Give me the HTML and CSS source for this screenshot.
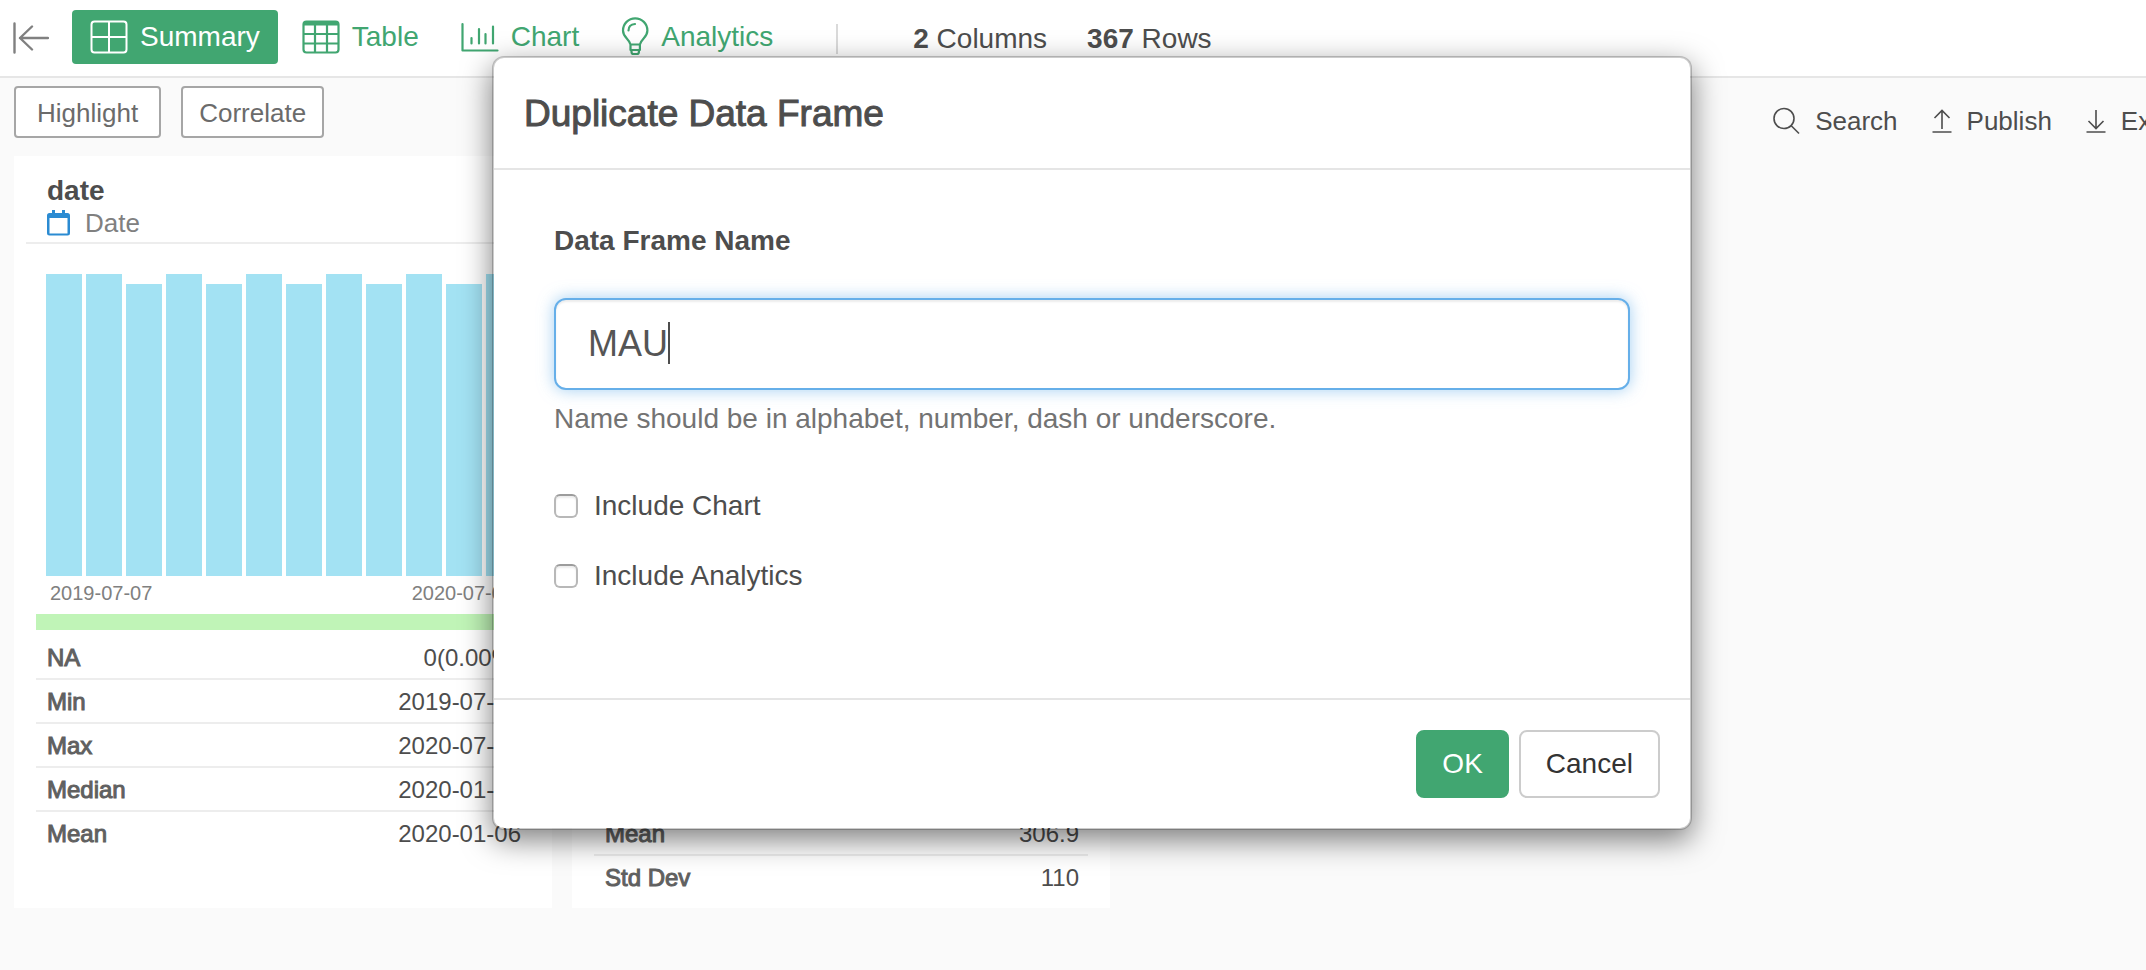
FILE: index.html
```html
<!DOCTYPE html>
<html lang="en">
<head>
<meta charset="utf-8">
<title>Duplicate Data Frame</title>
<link rel="stylesheet" href="styles.css">
</head>
<body>
<header class="topbar">
  <button class="collapse" type="button" aria-label="Collapse panel">
    <svg width="36" height="32" viewBox="0 0 36 32" fill="none" stroke="#808080" stroke-width="2.4" stroke-linecap="round" stroke-linejoin="round"><path d="M1.5 1.5v29M35 16H7M19 4.500L7 16l12 11.500" /></svg>
  </button>
  <nav class="tabs">
    <button class="tab tab-active" type="button">
      <svg width="38" height="34" viewBox="0 0 38 34" fill="none" stroke="currentColor" stroke-width="2"><rect x="1.500" y="1.500" width="35" height="31" rx="3"/><path d="M19 2v30M2 17h34"/></svg>
      <span>Summary</span>
    </button>
    <button class="tab" type="button">
      <svg width="38" height="34" viewBox="0 0 38 34" fill="none" stroke="currentColor" stroke-width="2.200"><rect x="1.500" y="1.500" width="35" height="31" rx="3"/><path d="M2 3.500h34" stroke-width="4"/><path d="M13 3v29M25 3v29M2 14h34M2 23.500h34"/></svg>
      <span>Table</span>
    </button>
    <button class="tab" type="button">
      <svg width="38" height="34" viewBox="0 0 38 34" fill="none" stroke="currentColor" stroke-width="2.200" stroke-linecap="round" stroke-linejoin="round"><path d="M1.500 4v26.500h35M10.500 18v5.500M18 9v14.500M24.500 14v9.500M32 6.500v17"/></svg>
      <span>Chart</span>
    </button>
    <button class="tab" type="button">
      <svg width="28" height="40" viewBox="0 0 28 40" fill="none" stroke="currentColor" stroke-width="2.200" stroke-linecap="round" stroke-linejoin="round"><path d="M9.500 27.500C8 21.500 2 20.500 2 13.500a12.200 12.200 0 0 1 24.400 0c0 7-6 8-7.500 14zM9.500 27.500v5.500h9.400v-5.500M10.500 33v2q0 2 2 2h3.400q2 0 2-2v-2M7.500 13.500q0-6 6.500-6.500"/></svg>
      <span>Analytics</span>
    </button>
  </nav>
  <div class="stats">
    <span><b>2</b> Columns</span>
    <span><b>367</b> Rows</span>
  </div>
</header>

<main>
  <div class="toolbar">
    <div class="filters">
      <button class="outline" type="button">Highlight</button>
      <button class="outline" type="button">Correlate</button>
    </div>
    <div class="actions">
      <button class="action" type="button">
        <svg width="27" height="28" viewBox="0 0 27 28" fill="none" stroke="currentColor" stroke-width="1.600"><circle cx="11" cy="11.500" r="10"/><path d="M18 18.500l8 8"/></svg>
        <span>Search</span>
      </button>
      <button class="action" type="button">
        <svg width="20" height="28" viewBox="0 0 20 28" fill="none" stroke="currentColor" stroke-width="1.600"><path d="M10 22V3.500M2.500 11L10 3.500l7.500 7.500M.500 25h19"/></svg>
        <span>Publish</span>
      </button>
      <button class="action" type="button">
        <svg width="20" height="28" viewBox="0 0 20 28" fill="none" stroke="currentColor" stroke-width="1.600"><path d="M10 3v18.500M2.500 14l7.500 7.500 7.500-7.500M.500 25h19"/></svg>
        <span>Export</span>
      </button>
    </div>
  </div>

  <div class="cards">
    <section class="card">
      <div class="card-head">
        <h2>date</h2>
        <div class="type">
          <svg width="23" height="27" viewBox="0 0 23 27"><path fill="#2b8bd2" d="M5 0h3v3h7V0h3v3h2.500Q23 3 23 5.500V23q0 2.500-2.500 2.500h-18Q0 25.500 0 23V5.500Q0 3 2.500 3H5zM2.500 8v15.500h18V8z" fill-rule="evenodd"/></svg>
          <span>Date</span>
        </div>
      </div>
      <div class="bars">
        <i></i><i></i><i class="short"></i><i></i><i class="short"></i><i></i><i class="short"></i><i></i><i class="short"></i><i></i><i class="short"></i><i></i>
      </div>
      <div class="axis"><span>2019-07-07</span><span>2020-07-07</span></div>
      <div class="quality"></div>
      <table class="summary">
        <tr><th>NA</th><td>0(0.00%)</td></tr>
        <tr><th>Min</th><td>2019-07-07</td></tr>
        <tr><th>Max</th><td>2020-07-07</td></tr>
        <tr><th>Median</th><td>2020-01-06</td></tr>
        <tr><th>Mean</th><td>2020-01-06</td></tr>
      </table>
    </section>
    <section class="card card-bottom">
      <table class="summary">
        <tr><th>Mean</th><td>306.9</td></tr>
        <tr><th>Std Dev</th><td>110</td></tr>
      </table>
    </section>
  </div>
</main>

<div class="overlay">
  <form class="modal" role="dialog" aria-labelledby="modal-title">
    <h1 class="modal-title" id="modal-title">Duplicate Data Frame</h1>
    <div class="modal-body">
      <label class="field-label" for="frame-name">Data Frame Name</label>
      <div class="field">
        <input class="field-input" id="frame-name" type="text" value="MAU">
        <span class="caret"></span>
      </div>
      <p class="help">Name should be in alphabet, number, dash or underscore.</p>
      <label class="check"><input type="checkbox"><span>Include Chart</span></label>
      <label class="check"><input type="checkbox"><span>Include Analytics</span></label>
    </div>
    <div class="modal-foot">
      <button class="btn btn-ok" type="button">OK</button>
      <button class="btn" type="button">Cancel</button>
    </div>
  </form>
</div>
</body>
</html>
```
FILE: styles.css
```css
* {
  box-sizing: border-box;
}

body {
  margin: 0;
  min-height: 100vh;
  position: relative;
  overflow: hidden;
  background: #fafafa;
  color: #4d4d4d;
  font-family: "Liberation Sans", Arial, sans-serif;
  font-size: 28px;
}

button {
  margin: 0;
  padding: 0;
  border: 0;
  background: none;
  color: inherit;
  font: inherit;
  white-space: nowrap;
}

svg {
  display: block;
  flex: none;
}

/* Top bar */
.topbar {
  display: flex;
  align-items: center;
  height: 78px;
  padding-left: 13px;
  background: #fff;
  border-bottom: 2px solid #e6e6e6;
}

.collapse {
  margin-right: 23px;
}

.tabs {
  display: flex;
  gap: 6px;
  margin-bottom: 2px;
}

.tab {
  display: flex;
  align-items: center;
  gap: 12px;
  height: 54px;
  padding: 0 18px;
  border-radius: 4px;
  color: #41a671;
}

.tab-active {
  background: #41a671;
  color: #fff;
}

.stats {
  display: flex;
  gap: 40px;
  margin-top: 2px;
  margin-left: 45px;
  padding-left: 77px;
  position: relative;
}

.stats::before {
  content: "";
  position: absolute;
  left: 0;
  top: 1px;
  width: 2px;
  height: 30px;
  background: #dadada;
}

/* Toolbar */
.toolbar {
  display: flex;
  justify-content: space-between;
  padding: 8px 14px 18px;
  font-size: 26px;
}

.filters {
  display: flex;
  gap: 20px;
}

.outline {
  height: 52px;
  padding: 2px 16px 0;
  border: 2px solid #a6a6a6;
  border-radius: 4px;
  background: #fff;
  color: #6b6b6b;
}

.outline:first-child {
  padding: 2px 21px 0;
}

.actions {
  display: flex;
  gap: 34px;
  margin-right: -64px;
  padding-top: 18px;
}

.action {
  display: flex;
  align-items: center;
  gap: 15px;
  height: 34px;
}

/* Cards */
.cards {
  display: grid;
  grid-template-columns: 538px 538px;
  gap: 20px;
  padding-left: 14px;
}

.card {
  display: flex;
  flex-direction: column;
  min-height: 752px;
  background: #fff;
}

.card-bottom {
  justify-content: flex-end;
  padding-bottom: 8px;
}

.card-head {
  margin: 0 12px;
  padding: 19px 21px 2px;
  border-bottom: 2px solid #ededed;
}

.card-head h2 {
  margin: 0;
  font-size: 28px;
  line-height: 32px;
}

.type {
  display: flex;
  align-items: center;
  gap: 15px;
  color: #808080;
  font-size: 26px;
  line-height: 33px;
}

.bars {
  display: flex;
  align-items: flex-end;
  gap: 4px;
  height: 302px;
  margin: 30px 30px 0 32px;
}

.bars i {
  flex: 1;
  height: 100%;
  background: #a3e2f3;
}

.bars .short {
  height: 292px;
}

.axis {
  display: flex;
  justify-content: space-between;
  margin: 5px 38px 9px 36px;
  color: #808080;
  font-size: 20px;
  line-height: 24px;
}

.quality {
  height: 16px;
  margin: 0 22px 6px;
  background: #c0f4b7;
}

.summary {
  margin: 0 22px;
  border-collapse: separate;
  border-spacing: 0;
  font-size: 24px;
  line-height: 40px;
}

.summary th,
.summary td {
  padding: 2px 9px 0 11px;
  border-bottom: 2px solid #ededed;
}

.summary tr:last-child > * {
  border-bottom-color: transparent;
}

.summary th {
  color: #606060;
  font-weight: 400;
  text-align: left;
  -webkit-text-stroke: 1px #606060;
}

.summary td {
  text-align: right;
}

/* Dialog */
.overlay {
  position: absolute;
  inset: 0 -38px 0 0;
  display: flex;
  justify-content: center;
  align-items: flex-start;
  padding-top: 56px;
}

.modal {
  width: 1200px;
  border: 2px solid rgba(0, 0, 0, 0.2);
  border-radius: 12px;
  background: #fff;
  background-clip: padding-box;
  box-shadow: 0 10px 30px rgba(0, 0, 0, 0.5);
}

.modal-title {
  margin: 0;
  padding: 31px 30px 29px;
  border-bottom: 2px solid #e5e5e5;
  font-size: 37px;
  font-weight: 400;
  line-height: 50px;
  -webkit-text-stroke: 1px #4d4d4d;
}

.modal-body {
  display: flex;
  flex-direction: column;
  padding: 51px 60px 96px;
}

.field-label {
  margin-bottom: 37px;
  font-weight: 700;
  line-height: 40px;
}

.field {
  position: relative;
}

.field-input {
  display: block;
  width: 100%;
  height: 92px;
  padding: 0 32px;
  border: 2px solid #66afe9;
  border-radius: 12px;
  outline: 0;
  background: #fff;
  box-shadow: inset 0 2px 2px rgba(0, 0, 0, 0.075), 0 0 16px rgba(102, 175, 233, 0.6);
  color: #555;
  font: inherit;
  font-size: 36px;
}

.caret {
  position: absolute;
  left: 114px;
  top: 24px;
  width: 2px;
  height: 42px;
  background: #4d4d4d;
}

.help {
  margin: 9px 0 51px;
  color: #737373;
  line-height: 40px;
}

.check {
  display: flex;
  align-items: center;
  gap: 16px;
  margin-bottom: 38px;
  line-height: 32px;
}

.check input {
  appearance: none;
  width: 24px;
  height: 24px;
  margin: 0;
  border: 2px solid #b8b8b8;
  border-top-color: #9c9c9c;
  border-radius: 6px;
  background: #fff;
  box-shadow: inset 0 2px 2px rgba(0, 0, 0, 0.08);
}

.check:last-child {
  margin-bottom: 10px;
}

.modal-foot {
  display: flex;
  justify-content: flex-end;
  gap: 10px;
  padding: 30px;
  border-top: 2px solid #e5e5e5;
}

.btn {
  height: 68px;
  padding: 0 25px;
  border: 2px solid #ccc;
  border-radius: 8px;
  background: #fff;
  color: #333;
}

.btn-ok {
  padding: 0 24px;
  border-color: #41a671;
  background: #41a671;
  color: #fff;
}
```
